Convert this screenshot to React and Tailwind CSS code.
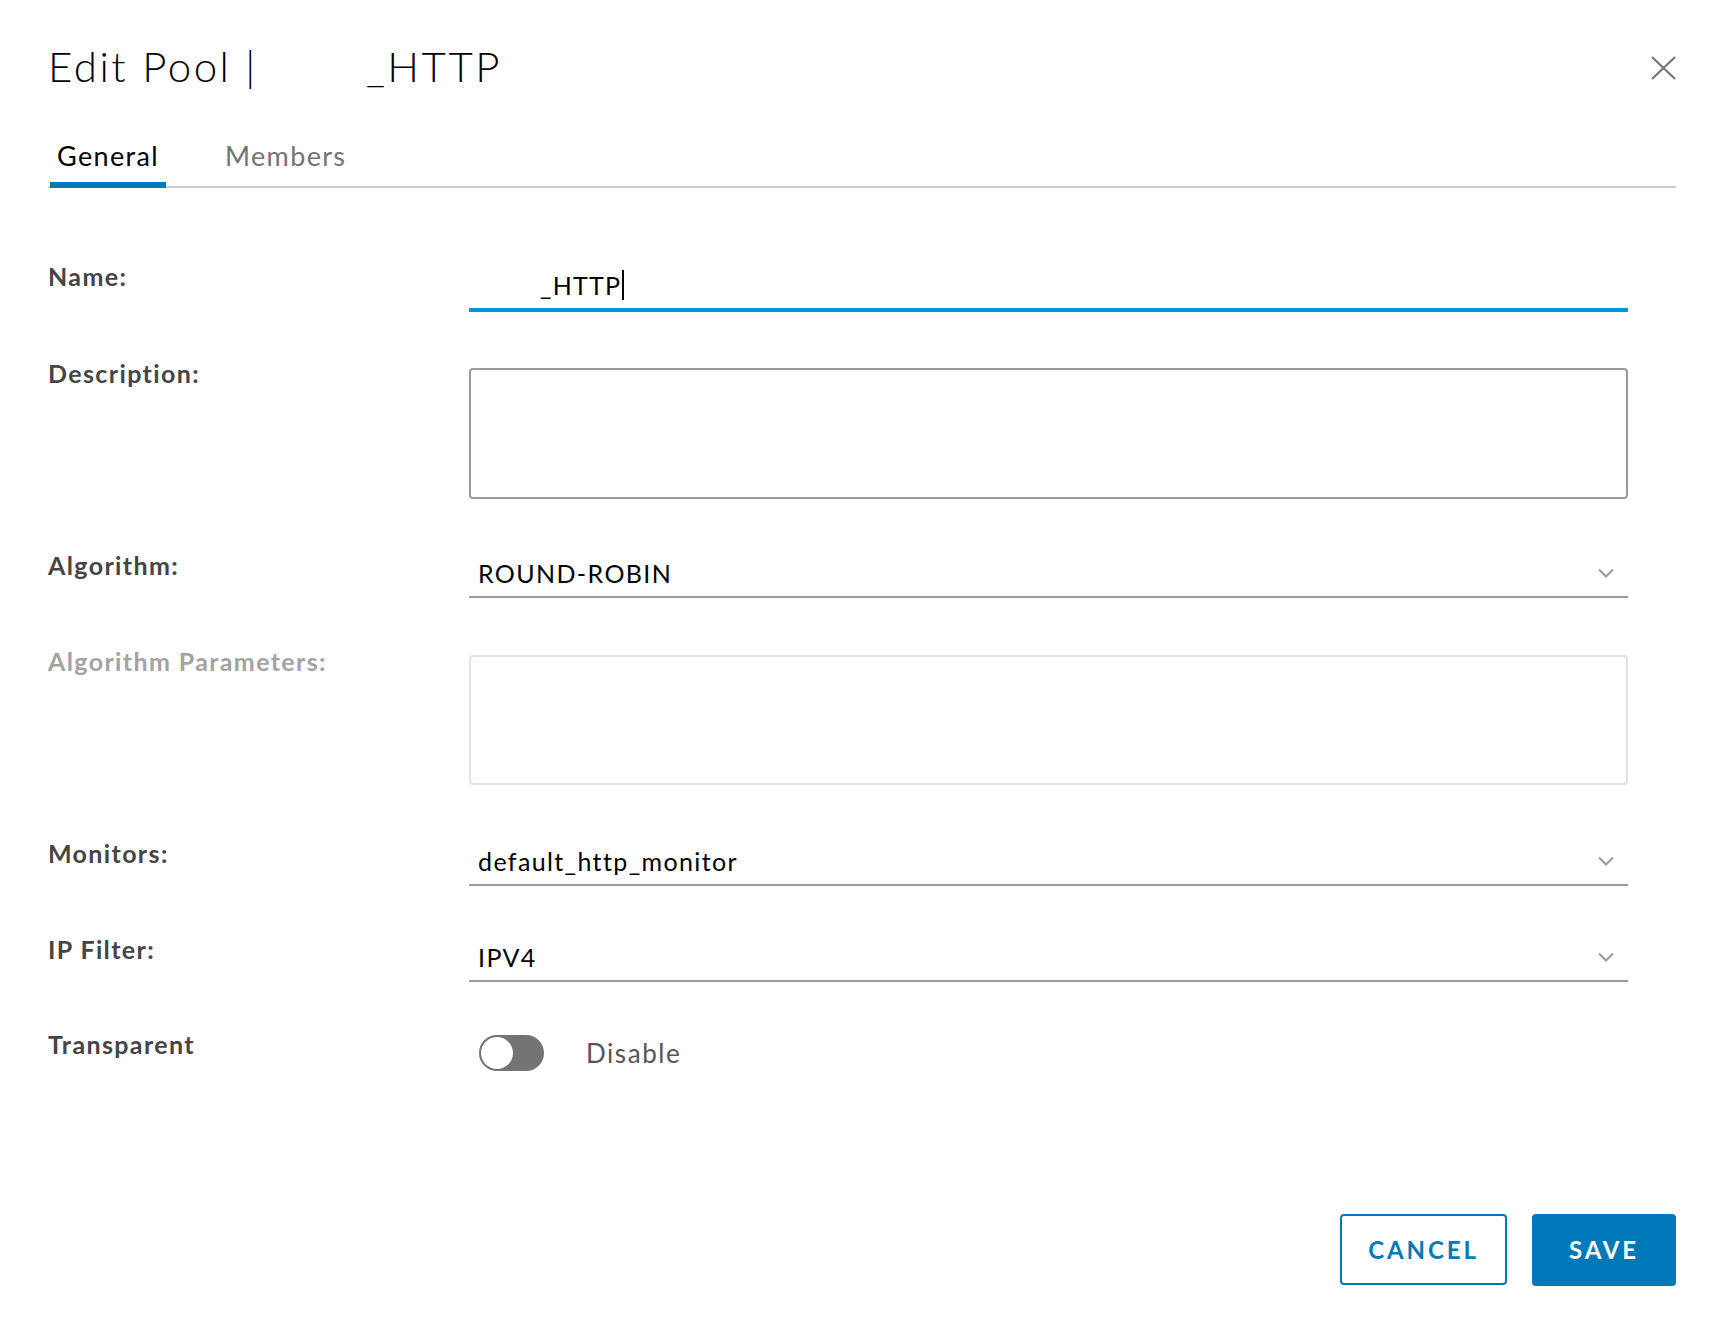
function Chevron() {
  return (
    <svg width="16" height="10" viewBox="0 0 16 10" fill="none" stroke="#9a9a9a" strokeWidth="2">
      <path d="M1 1.5l7 7 7-7" />
    </svg>
  )
}

function Label({ children, muted }) {
  return (
    <div
      className={`w-[421px] shrink-0 text-[25px] leading-[30px] font-bold tracking-[0.055em] ${
        muted ? 'text-[#a3a3a3]' : 'text-[#454545]'
      }`}
    >
      {children}
    </div>
  )
}

function Select({ value }) {
  return (
    <div className="flex-1 mr-[48px] pt-[8px] pb-[8px] pl-[9px] pr-[14px] border-b-2 border-[#9a9a9a] flex items-center justify-between">
      <span className="text-[25px] leading-[30px] tracking-[0.055em] text-black">{value}</span>
      <Chevron />
    </div>
  )
}

export default function App() {
  return (
    <div className="min-h-screen bg-white font-['Lato',sans-serif] px-[48px] pt-[41px]">
      {/* Header */}
      <header className="flex items-start justify-between">
        <h1 className="text-[42px] leading-[50px] font-light tracking-[0.06em] text-black">
          Edit Pool |<span className="inline-block w-[108px]" />_HTTP
        </h1>
        <button className="mt-[15px] text-[#737373]">
          <svg width="25" height="24" viewBox="0 0 25 24" fill="none" stroke="currentColor" strokeWidth="2">
            <path d="M1 1l23 22M24 1L1 23" />
          </svg>
        </button>
      </header>

      {/* Tabs */}
      <nav className="mt-[50px] flex border-b-2 border-[#cccccc]">
        <button className="ml-[2px] px-[7px] pb-[11px] -mb-[2px] border-b-[6px] border-[#0079b8] text-[27px] leading-[30px] tracking-[0.05em] text-black">
          General
        </button>
        <button className="ml-[52px] px-[7px] pb-[11px] -mb-[2px] border-b-[6px] border-transparent text-[27px] leading-[30px] tracking-[0.05em] text-[#737373]">
          Members
        </button>
      </nav>

      {/* Form */}
      <div className="mt-[73px] flex items-start">
        <Label>Name:</Label>
        <div className="flex-1 mr-[48px] h-[51px] pt-[9px] pb-[8px] pl-[9px] border-b-4 border-[#0095d3] text-[25px] leading-[30px] tracking-[0.05em] text-black">
          <span className="inline-block w-[62px]" />
          <span className="border-r-2 border-black pr-[1px]">_HTTP</span>
        </div>
      </div>

      <div className="mt-[46px] flex items-start">
        <Label>Description:</Label>
        <textarea className="flex-1 mr-[48px] mt-[10px] h-[131px] block border-2 border-[#9a9a9a] rounded-[4px] resize-none outline-none" />
      </div>

      <div className="mt-[51px] flex items-start">
        <Label>Algorithm:</Label>
        <Select value="ROUND-ROBIN" />
      </div>

      <div className="mt-[48px] flex items-start">
        <Label muted>Algorithm Parameters:</Label>
        <textarea
          disabled
          className="flex-1 mr-[48px] mt-[9px] h-[130px] block border-2 border-[#e3e3e3] rounded-[4px] bg-white resize-none outline-none"
        />
      </div>

      <div className="mt-[53px] flex items-start">
        <Label>Monitors:</Label>
        <Select value="default_http_monitor" />
      </div>

      <div className="mt-[48px] flex items-start">
        <Label>IP Filter:</Label>
        <Select value="IPV4" />
      </div>

      <div className="mt-[47px] flex items-start">
        <Label>Transparent</Label>
        <div className="mt-[6px] ml-[10px] flex items-center">
          <div className="relative w-[65px] h-[36px] rounded-full bg-[#747474]">
            <span className="absolute left-[2px] top-[2px] w-[32px] h-[32px] rounded-full bg-white" />
          </div>
          <span className="ml-[42px] text-[26px] leading-[36px] tracking-[0.06em] text-[#565656]">Disable</span>
        </div>
      </div>

      {/* Footer */}
      <div className="mt-[143px] flex justify-end gap-[25px]">
        <button className="w-[167px] h-[71px] border-2 border-[#0079b8] rounded-[4px] text-[#0079b8] text-[24px] font-bold tracking-[0.12em]">
          CANCEL
        </button>
        <button className="w-[144px] h-[72px] bg-[#0079b8] rounded-[4px] text-white text-[24px] font-bold tracking-[0.12em]">
          SAVE
        </button>
      </div>
    </div>
  )
}
